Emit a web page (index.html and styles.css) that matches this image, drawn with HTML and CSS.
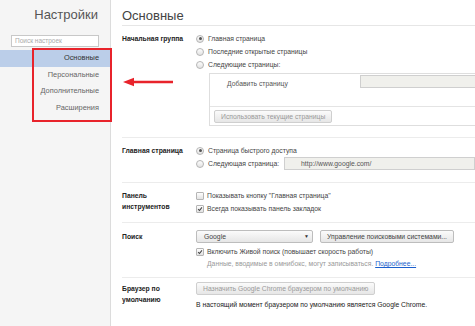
FILE: index.html
```html
<!DOCTYPE html>
<html lang="ru">
<head>
  <meta charset="UTF-8"/>
  <title>Настройки</title>
  <link rel="stylesheet" href="styles.css">
</head>
<body>
  <div class="page">
    <aside class="sidebar">
      <h1 class="side-title">Настройки</h1>
      <div class="search">Поиск настроек</div>
      <ul class="nav">
        <li class="nav-item active">Основные</li>
        <li class="nav-item">Персональные</li>
        <li class="nav-item">Дополнительные</li>
        <li class="nav-item">Расширения</li>
      </ul>
    </aside>

    <main class="main">
      <h1 class="main-title">Основные</h1>

      <!-- Начальная группа -->
      <section class="group group-start">
        <div class="group-label">Начальная группа</div>
        <div class="group-body">
          <div class="row"><span class="radio checked"></span>Главная страница</div>
          <div class="row"><span class="radio"></span>Последние открытые страницы</div>
          <div class="row"><span class="radio"></span>Следующие страницы:</div>
          <div class="pages-box">
            <div class="pages-add">
              <span class="pages-add-text">Добавить страницу</span>
              <span class="field pages-field"></span>
            </div>
            <div class="pages-foot">
              <span class="btn disabled">Использовать текущие страницы</span>
            </div>
          </div>
        </div>
      </section>

      <!-- Главная страница -->
      <section class="group group-home">
        <div class="group-label">Главная страница</div>
        <div class="group-body">
          <div class="row"><span class="radio checked"></span>Страница быстрого доступа</div>
          <div class="row"><span class="radio"></span>Следующая страница:<span class="field url-field">http://www.google.com/</span></div>
        </div>
      </section>

      <!-- Панель инструментов -->
      <section class="group group-tools">
        <div class="group-label">Панель инструментов</div>
        <div class="group-body">
          <div class="row"><span class="check"></span>Показывать кнопку "Главная страница"</div>
          <div class="row"><span class="check checked"><svg viewBox="0 0 8 8"><polyline points="1.5,4.2 3.3,6 6.6,1.8"/></svg></span>Всегда показывать панель закладок</div>
        </div>
      </section>

      <!-- Поиск -->
      <section class="group group-search">
        <div class="group-label">Поиск</div>
        <div class="group-body">
          <div class="row">
            <span class="select">Google<span class="select-arrow">&#9660;</span></span>
            <span class="btn">Управление поисковыми системами...</span>
          </div>
          <div class="row row-gap"><span class="check checked"><svg viewBox="0 0 8 8"><polyline points="1.5,4.2 3.3,6 6.6,1.8"/></svg></span>Включить Живой поиск (повышает скорость работы)</div>
          <div class="hint">Данные, вводимые в омнибокс, могут записываться. <a href="#" class="link">Подробнее...</a></div>
        </div>
      </section>

      <!-- Браузер по умолчанию -->
      <section class="group group-default">
        <div class="group-label">Браузер по умолчанию</div>
        <div class="group-body">
          <div class="row"><span class="btn disabled">Назначить Google Chrome браузером по умолчанию</span></div>
          <div class="note">В настоящий момент браузером по умолчанию является Google Chrome.</div>
        </div>
      </section>
    </main>

    <!-- annotation -->
    <div class="mark"></div>
    <svg class="arrow" viewBox="0 0 52 12">
      <line x1="9" y1="6" x2="50" y2="6"/>
      <polygon points="0,6 11,1.8 11,10.2"/>
    </svg>
  </div>
</body>
</html>
```

FILE: styles.css
```css
* {
  box-sizing: border-box;
}

body {
  margin: 0;
  background: #fff;
  font-family: "Liberation Sans", Arial, sans-serif;
  font-size: 6.8px;
  color: #444;
}

.page {
  position: relative;
  display: flex;
  width: 475px;
  height: 326px;
  overflow: hidden;
}

/* Sidebar */
.sidebar {
  flex: 0 0 111px;
  background: #f5f5f5;
  border-right: 1px solid #dcdcdc;
  padding-top: 6px;
}

.side-title {
  margin: 0;
  padding-right: 12px;
  text-align: right;
  font-size: 13px;
  font-weight: normal;
  line-height: 18px;
  color: #555;
}

.search {
  margin: 11px 0 0 11px;
  width: 88px;
  height: 12px;
  padding-left: 3px;
  border: 1px solid #c8c8c8;
  background: #fff;
  color: #aaa;
  font-size: 6.5px;
  line-height: 10px;
}

.nav {
  list-style: none;
  margin: 3px 0 0;
  padding: 0;
}

.nav-item {
  height: 16.7px;
  line-height: 16.7px;
  padding-right: 11px;
  text-align: right;
  font-size: 7.4px;
  color: #666;
}

.nav-item.active {
  background: #bbcee9;
  color: #333;
}

/* Main */
.main {
  flex: 1;
  min-width: 0;
  padding-left: 11px;
}

.main-title {
  margin: 0;
  padding-top: 7px;
  height: 26px;
  font-size: 13px;
  font-weight: normal;
  line-height: 18px;
  color: #444;
  border-bottom: 1px solid #e6e6e6;
}

.group {
  display: grid;
  grid-template-columns: 74px 1fr;
  padding: 6px 0 7px;
  border-bottom: 1px solid #ececec;
}

.group-start {
  padding-bottom: 11px;
}

.group-home {
  padding-bottom: 12px;
}

.group-search {
  padding-top: 7px;
}

.group-default {
  padding-top: 4px;
  border-bottom: none;
}

.group-label {
  padding-top: 1px;
  padding-right: 4px;
  font-weight: bold;
  line-height: 11px;
  color: #222;
}

.group-body {
  min-width: 0;
}

.row {
  display: flex;
  align-items: center;
  height: 13px;
  white-space: nowrap;
}

.row-gap {
  margin-top: 2px;
}

/* Radio and checkbox */
.radio {
  flex: 0 0 8px;
  width: 8px;
  height: 8px;
  margin-right: 4px;
  border: 1px solid #b5b5b5;
  border-radius: 50%;
  background: linear-gradient(#fdfdfd, #e2e2e2);
  position: relative;
}

.radio.checked::after {
  content: "";
  position: absolute;
  left: 1.5px;
  top: 1.5px;
  width: 3px;
  height: 3px;
  border-radius: 50%;
  background: #555;
}

.check {
  flex: 0 0 8px;
  width: 8px;
  height: 8px;
  margin-right: 3px;
  border: 1px solid #b5b5b5;
  border-radius: 1px;
  background: linear-gradient(#fdfdfd, #e2e2e2);
}

.check svg {
  display: block;
  width: 6px;
  height: 6px;
}

.check polyline {
  fill: none;
  stroke: #444;
  stroke-width: 1.4;
}

/* Fields and buttons */
.field {
  display: block;
  height: 13px;
  border: 1px solid #cfcfcf;
  background: #f0f0ec;
  color: #555;
  line-height: 11px;
}

.url-field {
  width: 200px;
  margin-left: 5px;
  padding-left: 16px;
}

.pages-box {
  width: 300px;
  margin: 2px 0 0 13px;
  border: 1px solid #dedede;
}

.pages-add {
  display: flex;
  height: 33px;
  padding-top: 1px;
  border-bottom: 1px solid #e4e4e4;
}

.pages-add-text {
  flex: 0 0 150px;
  padding: 2px 0 0 17px;
  line-height: 13px;
  color: #555;
}

.pages-field {
  width: 160px;
}

.pages-foot {
  display: flex;
  height: 18px;
  padding: 3px 0 0 4px;
}

.btn {
  display: inline-block;
  height: 13px;
  padding: 0 6px;
  border: 1px solid #bdbdbd;
  border-radius: 2px;
  background: linear-gradient(#fbfbfb, #e6e6e6);
  line-height: 11px;
  color: #444;
  white-space: nowrap;
}

.btn.disabled {
  color: #9a9a9a;
  border-color: #cfcfcf;
}

.select {
  display: flex;
  justify-content: space-between;
  width: 117px;
  height: 13px;
  margin-right: 7px;
  padding: 0 3px 0 7px;
  border: 1px solid #bdbdbd;
  border-radius: 2px;
  background: linear-gradient(#fbfbfb, #e6e6e6);
  line-height: 11px;
  color: #444;
}

.select-arrow {
  font-size: 5px;
  color: #333;
}

.hint {
  padding-left: 11px;
  line-height: 12px;
  color: #999;
  white-space: nowrap;
}

.link {
  color: #1b5fcc;
}

.note {
  margin-top: 3px;
  line-height: 13px;
  color: #222;
  white-space: nowrap;
}

/* Annotation over the page */
.mark {
  position: absolute;
  left: 32px;
  top: 48px;
  width: 80px;
  height: 74px;
  border: 2px solid #e8232b;
}

.arrow {
  position: absolute;
  left: 123px;
  top: 76px;
  width: 52px;
  height: 12px;
}

.arrow line {
  stroke: #e8232b;
  stroke-width: 2.4;
}

.arrow polygon {
  fill: #e8232b;
}
```
